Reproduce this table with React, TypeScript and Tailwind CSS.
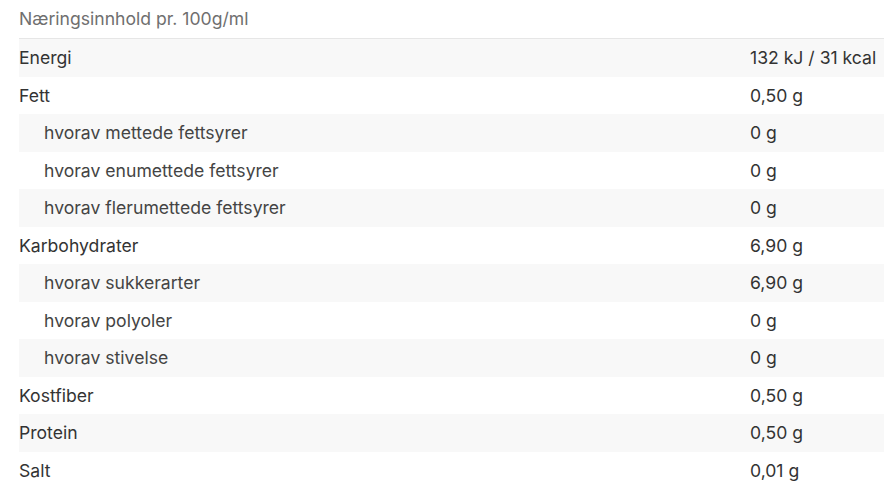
import React from 'react';

type Row = { label: string; value: string; sub?: boolean };

const rows: Row[] = [
  { label: 'Energi', value: '132 kJ / 31 kcal' },
  { label: 'Fett', value: '0,50 g' },
  { label: 'hvorav mettede fettsyrer', value: '0 g', sub: true },
  { label: 'hvorav enumettede fettsyrer', value: '0 g', sub: true },
  { label: 'hvorav flerumettede fettsyrer', value: '0 g', sub: true },
  { label: 'Karbohydrater', value: '6,90 g' },
  { label: 'hvorav sukkerarter', value: '6,90 g', sub: true },
  { label: 'hvorav polyoler', value: '0 g', sub: true },
  { label: 'hvorav stivelse', value: '0 g', sub: true },
  { label: 'Kostfiber', value: '0,50 g' },
  { label: 'Protein', value: '0,50 g' },
  { label: 'Salt', value: '0,01 g' },
];

export default function App() {
  return (
    <div className="w-[884px] h-[488px] overflow-hidden bg-white font-['Inter',sans-serif] text-[17.6px] text-[#333333]">
      <div className="pl-[19px]">
        {/* Header */}
        <div className="h-[39px] flex items-center text-[#6f6f6f] border-b border-[#e6e6e6]">
          Næringsinnhold pr. 100g/ml
        </div>

        {rows.map((r, i) => (
          <div
            key={r.label}
            className={`h-[37.5px] pt-[1px] flex items-center ${i % 2 === 0 ? 'bg-[#f8f8f8]' : 'bg-white'}`}
          >
            <div className={`w-[731px] shrink-0 ${r.sub ? 'pl-[25px] text-[#444444]' : ''}`}>{r.label}</div>
            <div className="flex-1">{r.value}</div>
          </div>
        ))}
      </div>
    </div>
  );
}
